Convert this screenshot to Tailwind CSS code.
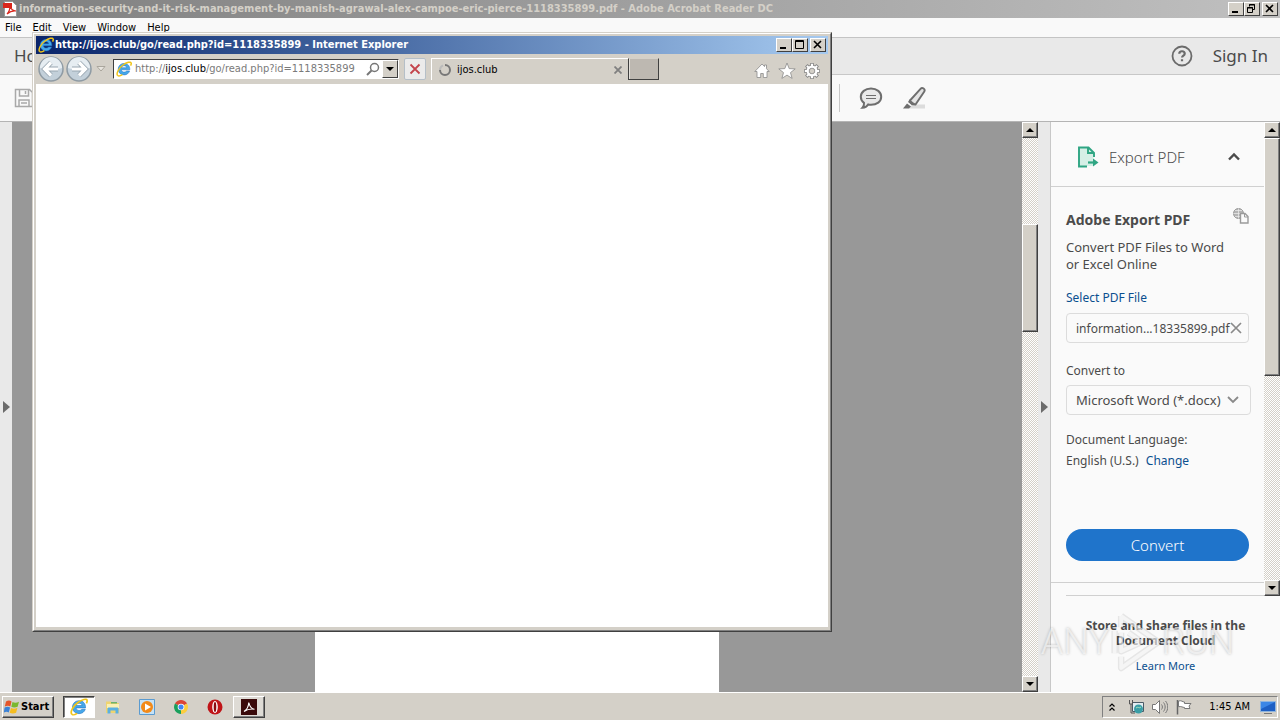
<!DOCTYPE html>
<html lang="en">
<head>
  <meta charset="UTF-8">
  <meta name="viewport" content="width=device-width, initial-scale=1">
  <title>Desktop</title>
  <script src="https://cdn.jsdelivr.net/npm/@tailwindcss/browser@4"></script>
</head>
<body class="relative h-screen flex flex-col overflow-hidden bg-[#f9f9f9] text-black text-[11px] leading-4 font-['DejaVu_Sans_Condensed','DejaVu_Sans',sans-serif]">

  <!-- Shared icons -->
  <svg class="hidden">
    <symbol id="ie" viewBox="0 0 16 16">
      <path d="M13.800 8.800H5.400c.1 1.500 1.300 2.300 2.800 2.300 1.100 0 1.900-.4 2.400-1.100h3c-.8 2.400-2.800 3.900-5.500 3.900-3.500 0-5.900-2.400-5.900-5.700s2.500-5.800 5.900-5.800c3.600 0 5.900 2.500 5.700 6.400zM5.500 6.700h5.200c-.2-1.300-1.200-2-2.600-2s-2.300.7-2.600 2z" fill="#45a8ea" stroke="#1c6fc0" stroke-width=".5"/>
      <path d="M1.800 14.600C-.3 12.800 2.800 7 7 4c3.700-2.800 7.800-3.700 8.200-2 .2.700-.1 1.700-.6 2.700" fill="none" stroke="#f0c419" stroke-width="1.500"/>
      <path d="M1.800 14.600c1 .8 2.800.2 4.600-1" fill="none" stroke="#f0c419" stroke-width="1.300"/>
    </symbol>
    <symbol id="up" viewBox="0 0 14 14"><path d="M3 9h8L7 5z" fill="#000"/></symbol>
    <symbol id="down" viewBox="0 0 14 14"><path d="M3 5h8L7 9z" fill="#000"/></symbol>
    <symbol id="min" viewBox="0 0 14 12"><path d="M3 8h6v2H3z" fill="#000"/></symbol>
    <symbol id="max" viewBox="0 0 14 12"><path d="M2.500 1.500h8v8h-8zM2 2.500h9" fill="none" stroke="#000"/></symbol>
    <symbol id="restore" viewBox="0 0 14 12"><path d="M4.500 1.500h5v5h-2M4.500 3.500v-2M4 2h6M2.500 4.500h5v5h-5zM2 5h6" fill="none" stroke="#000"/></symbol>
    <symbol id="close" viewBox="0 0 14 12"><path d="M3 2l7 7M10 2L3 9" stroke="#000" stroke-width="1.600"/></symbol>
  </svg>

  <!-- Acrobat title bar -->
  <header class="flex h-[18px] shrink-0 items-center bg-linear-to-r from-[#808080] to-[#c0c0c0] pl-[3px] pr-[2px]">
    <svg class="h-4 w-4 shrink-0" viewBox="0 0 16 16">
      <path d="M1.500.5h8l4 4v11h-12z" fill="#fff" stroke="#999"/>
      <path d="M0 2h9v5H0z" fill="#d9261c"/>
      <path d="M4 13c2-2 3-5 3-8 1 3 3 5 6 5-3-.5-6 .5-9 3z" fill="none" stroke="#d9261c" stroke-width="1.200"/>
    </svg>
    <h1 class="flex-1 truncate font-bold text-[#d4d0c8]">information-security-and-it-risk-management-by-manish-agrawal-alex-campoe-eric-pierce-1118335899.pdf - Adobe Acrobat Reader DC</h1>
    <button aria-label="Minimize" class="h-[14px] w-4 border border-t-white border-l-white border-r-[#404040] border-b-[#404040] bg-[#d4d0c8]"><svg class="h-3 w-[14px]"><use href="#min"/></svg></button>
    <button aria-label="Restore" class="mr-[2px] h-[14px] w-4 border border-t-white border-l-white border-r-[#404040] border-b-[#404040] bg-[#d4d0c8]"><svg class="h-3 w-[14px]"><use href="#restore"/></svg></button>
    <button aria-label="Close" class="h-[14px] w-4 border border-t-white border-l-white border-r-[#404040] border-b-[#404040] bg-[#d4d0c8]"><svg class="h-3 w-[14px]"><use href="#close"/></svg></button>
  </header>

  <!-- Menu -->
  <nav class="flex h-5 shrink-0 items-center gap-[11px] border-b border-[#c4c4c4] px-[5px]">
    <a href="#">File</a>
    <a href="#">Edit</a>
    <a href="#">View</a>
    <a href="#">Window</a>
    <a href="#">Help</a>
  </nav>

  <!-- Tabs row -->
  <div class="flex h-[37px] shrink-0 items-center border-b border-[#c8c8c8] bg-[#e9e9e9] pl-[14px] pr-3 font-['Noto_Sans',sans-serif] text-[17px] text-[#4b4b4b]">
    <a href="#" class="flex-1">Home</a>
    <button aria-label="Help" class="mr-5">
      <svg class="block h-[22px] w-[22px]" viewBox="0 0 22 22" fill="none" stroke="#6b6b6b" stroke-width="1.800">
        <circle cx="11" cy="11" r="9.500"/>
        <path d="M8.300 8.700c0-3.300 5.400-3.300 5.400 0 0 1.900-2.600 1.900-2.600 3.800M11 14.200v2" stroke-width="2.200"/>
      </svg>
    </button>
    <a href="#">Sign In</a>
  </div>

  <!-- Toolbar -->
  <div class="flex h-[47px] shrink-0 items-center border-b border-[#b4b4b4] pl-[14px]">
    <button aria-label="Save">
      <svg class="h-5 w-5" viewBox="0 0 20 20" fill="none" stroke="#a9a9a9" stroke-width="1.500">
        <path d="M1.500 1.500h14l3 3v14h-17zM5.500 2v6h9V2M5 18v-6h10v6M7 15h6M11.500 3v3"/>
      </svg>
    </button>
    <div class="ml-[805px] mr-[19px] h-7 w-px bg-[#c8c8c8]"></div>
    <button aria-label="Comment" class="mr-5">
      <svg class="h-6 w-6" viewBox="0 0 24 24" fill="#e9e9e9" stroke="#6e6e6e" stroke-width="2">
        <path d="M12 2.500c5.800 0 10.200 3.600 10.200 8.300 0 4.800-4.400 8-10.200 8-1 0-2 0-2.800-.3-1.200 2-3.200 3.200-5.700 3.200 1.300-1.300 1.700-3 1.500-4.800-2-1.500-3.200-3.600-3.200-6.100C1.800 6.100 6.200 2.500 12 2.500z"/>
        <path d="M7 9.500h10M7 12.500h10" stroke-width="1.200"/>
      </svg>
    </button>
    <button aria-label="Highlight">
      <svg class="h-6 w-6" viewBox="0 0 24 24">
        <path d="M9 18.500h13v4H6z" fill="#dcdcdc"/>
        <path d="M7 14.500L17.500 2.800c1.800-1.800 5.200.3 3.800 2.800L12.500 18.500c-2.500 0-5-1.500-5.500-4z" fill="#e4e4e4" stroke="#6e6e6e" stroke-width="1.900"/>
        <path d="M6.500 13.500l6.500 5-4 .8L5 16z" fill="#6e6e6e"/>
        <path d="M4 17.500l4 3L6 22.500H0z" fill="#6e6e6e"/>
      </svg>
    </button>
  </div>

  <!-- Document, scroll bar and tools pane -->
  <main class="flex min-h-0 flex-1">
    <button aria-label="Show navigation pane" class="flex w-3 shrink-0 items-center justify-center bg-[#e9e9e9]">
      <svg class="h-3 w-[7px]" viewBox="0 0 7 12"><path d="M0 0l7 6-7 6z" fill="#6b6b6b"/></svg>
    </button>
    <div class="flex flex-1 justify-center bg-[#989898]">
      <div class="w-[404px] bg-white"></div>
    </div>
    <div class="flex w-4 shrink-0 flex-col bg-[repeating-conic-gradient(#d4d0c8_0_25%,#ffffff_0_50%)] bg-[length:2px_2px]">
      <button aria-label="Scroll up" class="h-4 border border-t-white border-l-white border-r-[#404040] border-b-[#404040] bg-[#d4d0c8] shadow-[inset_-1px_-1px_#808080]"><svg class="h-[14px] w-[14px]"><use href="#up"/></svg></button>
      <div class="mt-[86px] h-[108px] border border-t-white border-l-white border-r-[#404040] border-b-[#404040] bg-[#d4d0c8] shadow-[inset_-1px_-1px_#808080]"></div>
      <button aria-label="Scroll down" class="mt-auto h-4 border border-t-white border-l-white border-r-[#404040] border-b-[#404040] bg-[#d4d0c8] shadow-[inset_-1px_-1px_#808080]"><svg class="h-[14px] w-[14px]"><use href="#down"/></svg></button>
    </div>
    <button aria-label="Hide tools pane" class="flex w-3 shrink-0 items-center justify-center bg-[#e9e9e9]">
      <svg class="h-3 w-[7px]" viewBox="0 0 7 12"><path d="M0 0l7 6-7 6z" fill="#6b6b6b"/></svg>
    </button>

    <aside class="flex w-[230px] shrink-0 flex-col border-l border-[#c8c8c8] bg-[#fafafa] font-['Noto_Sans',sans-serif] text-xs leading-[17px] text-[#4b4b4b]">
      <div class="flex h-[474px] shrink-0">
        <div class="flex min-w-0 flex-1 flex-col">
          <div class="flex h-[65px] shrink-0 items-center border-b border-[#d0d0d0] pl-[26px] pr-6 pt-[6px]">
            <svg class="mr-[10px] h-[22px] w-[22px]" viewBox="0 0 22 22">
              <path d="M2 1.500h10l4.500 4.500v14H2z" fill="#d5efe6"/>
              <path d="M10 20.500H2V1.500h9.500L17 7v4M11 1.500V7h6" fill="none" stroke="#2fa583" stroke-width="1.900"/>
              <path d="M11 16.500h6" stroke="#2fa583" stroke-width="2.200"/>
              <path d="M16 12.500l5.500 4-5.500 4z" fill="#2fa583"/>
            </svg>
            <h2 class="flex-1 text-[15px] font-light">Export PDF</h2>
            <button aria-label="Collapse"><svg class="block h-3 w-3" viewBox="0 0 12 12" fill="none" stroke="#4b4b4b" stroke-width="2.400"><path d="M1 8.500l5-5 5 5"/></svg></button>
          </div>
          <div class="flex flex-1 flex-col border-b border-[#d0d0d0] px-[15px]">
            <div class="mt-[17px] flex items-center justify-between">
              <h3 class="mt-[7px] text-sm leading-[17px] font-bold">Adobe Export PDF</h3>
              <svg class="h-4 w-4" viewBox="0 0 16 16" fill="none" stroke="#9a9a9a">
                <circle cx="5.500" cy="5.500" r="5" fill="#b5b5b5"/>
                <path d="M.5 5.500h10M5.500.5v10M2 2.500h7M2 8.500h7" stroke="#eee" stroke-width=".7"/>
                <path d="M7.500 5.500h4.500l3 3v6.500H7.500z" fill="#fafafa" stroke-width="1.400"/>
                <path d="M11.500 5.500v3.500H15"/>
              </svg>
            </div>
            <p class="mt-[11px] text-[13px] leading-[17px]">Convert PDF Files to Word<br>or Excel Online</p>
            <a href="#" class="mt-4 text-[#0a4f8f]">Select PDF File</a>
            <div class="mt-[7px] flex h-[30px] shrink-0 items-center justify-between rounded-sm border border-[#dcdcdc] pl-[9px] pr-[6px]">
              <span class="whitespace-nowrap">information...18335899.pdf</span>
              <button aria-label="Remove file" class="-ml-1"><svg class="block h-3 w-3" viewBox="0 0 12 12" stroke="#8a8a8a" stroke-width="1.700"><path d="M1 1l10 10M11 1L1 11"/></svg></button>
            </div>
            <label for="format" class="mt-[19px]">Convert to</label>
            <div class="relative mt-[6px] -mr-[2px]">
              <select id="format" class="block h-[30px] w-full appearance-none rounded-sm border border-[#dcdcdc] bg-transparent pl-[9px] text-[13px]">
                <option>Microsoft Word (*.docx)</option>
              </select>
              <svg class="pointer-events-none absolute right-3 top-[10px] h-[10px] w-3" viewBox="0 0 12 10" fill="none" stroke="#8a8a8a" stroke-width="1.800"><path d="M1 2l5 5 5-5"/></svg>
            </div>
            <p class="mt-4">Document Language:</p>
            <p class="mt-1">English (U.S.) <a href="#" class="ml-1 text-[#0a4f8f]">Change</a></p>
            <button class="mt-15 h-8 shrink-0 rounded-full bg-[#1f74cb] text-[15px] font-light text-white">Convert</button>
          </div>
          <div class="ml-[15px] mt-3 h-px bg-[#d0d0d0]"></div>
        </div>
        <div class="flex w-4 shrink-0 flex-col bg-[repeating-conic-gradient(#d4d0c8_0_25%,#ffffff_0_50%)] bg-[length:2px_2px]">
          <button aria-label="Scroll up" class="h-4 shrink-0 border border-t-white border-l-white border-r-[#404040] border-b-[#404040] bg-[#d4d0c8] shadow-[inset_-1px_-1px_#808080]"><svg class="h-[14px] w-[14px]"><use href="#up"/></svg></button>
          <div class="h-[238px] border border-t-white border-l-white border-r-[#404040] border-b-[#404040] bg-[#d4d0c8] shadow-[inset_-1px_-1px_#808080]"></div>
          <button aria-label="Scroll down" class="mt-auto h-4 shrink-0 border border-t-white border-l-white border-r-[#404040] border-b-[#404040] bg-[#d4d0c8] shadow-[inset_-1px_-1px_#808080]"><svg class="h-[14px] w-[14px]"><use href="#down"/></svg></button>
        </div>
      </div>
      <div class="flex flex-1 flex-col items-center pt-[22px] text-center leading-[15px]">
        <p class="font-bold">Store and share files in the<br>Document Cloud</p>
        <a href="#" class="mt-[10px] text-[11px] text-[#0a4f8f]">Learn More</a>
      </div>
    </aside>
  </main>

  <!-- Taskbar -->
  <footer class="flex h-7 shrink-0 items-center border-t border-white bg-[#d4d0c8] px-[2px]">
    <button class="flex h-[22px] w-[52px] items-center gap-px border border-t-white border-l-white border-r-[#404040] border-b-[#404040] pl-px font-bold shadow-[inset_-1px_-1px_#808080]">
      <svg class="h-4 w-4 shrink-0" viewBox="0 0 16 16">
        <path d="M2 2.500c2-1.200 4-1.200 5.500 0L6.300 7.500C4.800 6.500 3 6.500.8 7.500z" fill="#e5562a"/>
        <path d="M8.500 3c2 1 4 1 6.500-.3L13.600 7.800c-2.200 1-4.300 1-6.300 0z" fill="#7ab82f"/>
        <path d="M.6 8.500c2-1 4-1 5.500 0L4.800 13.500c-1.500-1-3.300-1-5 0z" fill="#3b82d6"/>
        <path d="M7 9c2 1 4 1 6.400-.2l-1.300 5c-2.200 1-4.300 1-6.400 0z" fill="#f5bd1f"/>
      </svg>
      Start
    </button>
    <div class="ml-[9px] flex items-center gap-[2px]">
      <button aria-label="Internet Explorer" class="flex h-[22px] w-8 items-center justify-center border border-t-[#404040] border-l-[#404040] border-r-white border-b-white bg-white shadow-[inset_1px_1px_#808080]"><svg class="h-[18px] w-[18px]"><use href="#ie"/></svg></button>
      <button aria-label="Explorer" class="flex h-[22px] w-8 items-center justify-center">
        <svg class="h-4 w-4" viewBox="0 0 16 16">
          <path d="M1 2.500h5l1 1.500h7v10H1z" fill="#efd470"/>
          <path d="M2 5h12v4H2z" fill="#faf0b4"/>
          <path d="M6 3h6v1.500H6z" fill="#6cb36c"/>
          <path d="M2.500 14.500V10c0-1 .5-1.500 1.500-1.500h8c1 0 1.500.5 1.500 1.500v4.500h-3V11.500h-5v3z" fill="#5ab0e2"/>
        </svg>
      </button>
      <button aria-label="Media Player" class="flex h-[22px] w-8 items-center justify-center">
        <svg class="h-4 w-4" viewBox="0 0 16 16">
          <path d="M.5.500h15v15H.5z" fill="#c5e2f7" stroke="#5b9bd0"/>
          <circle cx="8" cy="8" r="6" fill="#f28a1a"/>
          <path d="M6 4.500L12 8l-6 3.500z" fill="#fff"/>
        </svg>
      </button>
      <button aria-label="Chrome" class="flex h-[22px] w-8 items-center justify-center">
        <svg class="h-[14px] w-[14px]" viewBox="0 0 16 16">
          <path d="M8 8L1.100 4A8 8 0 0 1 14.900 4z" fill="#dc4437"/>
          <path d="M8 8L1.100 4A8 8 0 0 0 8 16z" fill="#1a9f5c"/>
          <path d="M8 8l6.900-4A8 8 0 0 1 8 16z" fill="#fccd3e"/>
          <circle cx="8" cy="8" r="3.800" fill="#fff"/>
          <circle cx="8" cy="8" r="2.900" fill="#4285f4"/>
        </svg>
      </button>
      <button aria-label="Opera" class="flex h-[22px] w-8 items-center justify-center">
        <svg class="h-4 w-4" viewBox="0 0 16 16">
          <circle cx="8" cy="8" r="7.500" fill="#c01418"/>
          <ellipse cx="8" cy="8" rx="2.800" ry="6" fill="#fff"/>
          <ellipse cx="8" cy="8" rx="1.300" ry="5" fill="#8d0b10"/>
        </svg>
      </button>
      <button aria-label="Acrobat Reader" class="flex h-[22px] w-8 items-center justify-center border border-t-white border-l-white border-r-[#404040] border-b-[#404040] bg-[#dedbd5] shadow-[inset_-1px_-1px_#808080]">
        <svg class="h-4 w-4 shrink-0" viewBox="0 0 16 16">
          <path d="M0 0h16v16H0z" fill="#3a0a0a"/>
          <path d="M3 12.500c2.500-1.500 4.500-5 4.800-9 .8 3.500 2.700 6.500 5.700 6.700-3.500-.6-7.500.3-10.500 2.300z" fill="none" stroke="#fff" stroke-width="1.100"/>
        </svg>
      </button>
    </div>
    <div class="ml-auto flex h-[22px] items-center border border-t-[#808080] border-l-[#808080] border-r-white border-b-white pl-[5px] pr-px">
      <button aria-label="Show hidden icons" class="mr-3"><svg class="block h-2 w-2" viewBox="0 0 8 8" fill="none" stroke="#000" stroke-width="1.200"><path d="M1.500 3.500L4 1l2.500 2.500M1.500 7.500L4 5l2.500 2.500"/></svg></button>
      <svg class="mr-2 h-4 w-4" viewBox="0 0 16 16">
        <path d="M4.500 3.500h11v9h-11z" fill="#e4eef2" stroke="#4b5b66"/>
        <path d="M1.500 1v4h3V1M3 5v9h4" fill="none" stroke="#555"/>
        <circle cx="10.500" cy="10" r="4.500" fill="#3a9ea6"/>
        <path d="M8 9c2-2 3 1 5-1" fill="none" stroke="#a9e0b9"/>
      </svg>
      <svg class="mr-2 h-4 w-4" viewBox="0 0 16 16" stroke="#777">
        <path d="M.5 5.500h3l4-4v13l-4-4h-3z" fill="#fff"/>
        <path d="M9.500 5.500c1.200 1.500 1.200 3.500 0 5M11.500 3.500c2.200 2.700 2.200 6.300 0 9M13.500 2c3 3.500 3 8.500 0 12" fill="none"/>
      </svg>
      <svg class="mr-[17px] h-4 w-4" viewBox="0 0 16 16">
        <path d="M1.500 1v14.500" stroke="#666" stroke-width="1.500"/>
        <path d="M2.500 2c3-1 4 1 6 1v1.500h6.500l-2 2.500 1 2.500H8.500V8.500c-2 0-3-1.500-6-.8z" fill="#fff" stroke="#777"/>
      </svg>
      <time class="mr-[10px]">1:45 AM</time>
      <svg class="h-4 w-4" viewBox="0 0 16 16">
        <path d="M.5 2.500h15v10H.5z" fill="#1d5fc4" stroke="#8fb4dd"/>
        <path d="M1 3h14L1 10z" fill="#3b86e6"/>
        <path d="M4 14.500h8" stroke="#777"/>
      </svg>
    </div>
  </footer>

  <!-- Internet Explorer window -->
  <section class="absolute left-8 top-8 flex h-[600px] w-[800px] flex-col border border-t-[#d4d0c8] border-l-[#d4d0c8] border-r-[#404040] border-b-[#404040] bg-[#d4d0c8]">
    <div class="flex min-h-0 flex-1 flex-col border border-t-white border-l-white border-r-[#808080] border-b-[#808080] p-[2px]">
      <div class="flex h-[18px] shrink-0 items-center bg-linear-to-r from-[#0a246a] to-[#a6caf0] px-[2px]">
        <svg class="h-4 w-4 shrink-0"><use href="#ie"/></svg>
        <h2 class="ml-px flex-1 truncate font-bold text-white">http://ijos.club/go/read.php?id=1118335899 - Internet Explorer</h2>
        <button aria-label="Minimize" class="h-[14px] w-4 border border-t-white border-l-white border-r-[#404040] border-b-[#404040] bg-[#d4d0c8]"><svg class="h-3 w-[14px]"><use href="#min"/></svg></button>
        <button aria-label="Maximize" class="mr-[2px] h-[14px] w-4 border border-t-white border-l-white border-r-[#404040] border-b-[#404040] bg-[#d4d0c8]"><svg class="h-3 w-[14px]"><use href="#max"/></svg></button>
        <button aria-label="Close" class="h-[14px] w-4 border border-t-white border-l-white border-r-[#404040] border-b-[#404040] bg-[#d4d0c8]"><svg class="h-3 w-[14px]"><use href="#close"/></svg></button>
      </div>

      <div class="flex h-[30px] shrink-0 items-center pl-[2px] pr-2">
        <button aria-label="Back" class="mr-[2px]"><svg class="block h-[26px] w-[26px]" viewBox="0 0 26 26">
          <circle cx="13" cy="13" r="12" fill="#c3d0da" stroke="#8f9ba4" stroke-width="1.500"/>
          <path d="M2 12a11 11 0 0 1 22 0c-6 2-16 2-22 0z" fill="#e6edf2"/>
          <path d="M13 6.500L6.500 13l6.500 6.500M7.500 13H20" fill="none" stroke="#97a5b0" stroke-width="4.800"/>
          <path d="M13 6.500L6.500 13l6.500 6.500M7.500 13H20" fill="none" stroke="#fff" stroke-width="3.200"/>
        </svg></button>
        <button aria-label="Forward" class="mr-1"><svg class="block h-[26px] w-[26px]" viewBox="0 0 26 26">
          <circle cx="13" cy="13" r="12" fill="#c3d0da" stroke="#8f9ba4" stroke-width="1.500"/>
          <path d="M2 12a11 11 0 0 1 22 0c-6 2-16 2-22 0z" fill="#e6edf2"/>
          <path d="M13 6.500l6.500 6.500-6.500 6.500M18.500 13H6" fill="none" stroke="#97a5b0" stroke-width="4.800"/>
          <path d="M13 6.500l6.500 6.500-6.500 6.500M18.500 13H6" fill="none" stroke="#fff" stroke-width="3.200"/>
        </svg></button>
        <svg class="mr-[7px] h-2 w-[10px]" viewBox="0 0 10 8"><path d="M1 1.500h8L5 6z" fill="#e8e5df" stroke="#aaa69d"/></svg>
        <div class="flex h-5 w-[286px] items-center border border-t-[#404040] border-l-[#404040] border-r-white border-b-white bg-white pl-[2px]">
          <svg class="h-4 w-4 shrink-0"><use href="#ie"/></svg>
          <p class="ml-[3px] flex-1 whitespace-nowrap text-[#7a7a7a]">http://<span class="text-black">ijos.club</span>/go/read.php?id=1118335899</p>
          <button aria-label="Search"><svg class="mr-[2px] block h-[14px] w-[14px]" viewBox="0 0 14 14" fill="none" stroke="#777"><circle cx="8.500" cy="5.500" r="4" stroke-width="1.500"/><path d="M5.500 8.500L1 13" stroke-width="2"/></svg></button>
          <button aria-label="Address history" class="h-[18px] w-4 border border-t-white border-l-white border-r-[#404040] border-b-[#404040] bg-[#d4d0c8]"><svg class="h-4 w-[14px]"><use href="#down"/></svg></button>
        </div>
        <button aria-label="Stop" class="ml-[5px] flex h-[22px] w-[22px] items-center justify-center rounded-xs border border-[#b5bfc8] bg-[#ebebeb]"><svg class="h-3 w-3" viewBox="0 0 12 12" stroke="#c4444c" stroke-width="1.800"><path d="M1.500 1.500l9 9M10.500 1.500l-9 9"/></svg></button>
        <div class="ml-[5px] flex h-[22px] w-[197px] items-center border-t border-l border-white pl-[7px] pr-[6px]">
          <svg class="mr-[6px] h-3 w-3" viewBox="0 0 12 12" fill="none" stroke-width="2"><path d="M6 1a5 5 0 1 1-5 5" stroke="#777"/><path d="M1 6a5 5 0 0 1 3-4.600" stroke="#bbb"/></svg>
          <span class="flex-1">ijos.club</span>
          <button aria-label="Close tab"><svg class="block h-2 w-2" viewBox="0 0 8 8" stroke="#808080" stroke-width="1.800"><path d="M.5.500l7 7M7.500.500l-7 7"/></svg></button>
        </div>
        <button aria-label="New tab" class="h-[22px] w-[31px] border border-t-[#d4d0c8] border-l-[#404040] border-r-[#404040] border-b-[#404040] bg-[#bdb8b1] shadow-[inset_1px_0_#e4e1db]"></button>
        <div class="ml-auto flex items-center gap-2 pt-1">
          <button aria-label="Home"><svg class="block h-4 w-4" viewBox="0 0 16 16"><path d="M8 1L.8 8.500H3v6h3.700v-4h2.600v4H13v-6h2.200L12.500 5.700V2h-2v1.600z" fill="#fff" stroke="#8a8a8a" stroke-width=".8"/></svg></button>
          <button aria-label="Favorites"><svg class="block h-[18px] w-[18px]" viewBox="0 0 18 18"><path d="M9 1l2.200 5.600 6 .3-4.700 3.700 1.600 5.800L9 13.100l-5.100 3.300 1.600-5.800L.8 6.900l6-.3z" fill="#fff" stroke="#8a8a8a" stroke-width=".8"/></svg></button>
          <button aria-label="Tools"><svg class="block h-4 w-4" viewBox="0 0 16 16" fill="none">
            <g stroke="#858585">
              <path d="M8 0v16M0 8h16M2.300 2.300l11.400 11.400M13.700 2.300L2.300 13.700" stroke-width="3.600"/>
              <circle cx="8" cy="8" r="4.400" stroke-width="3.600"/>
            </g>
            <g stroke="#fff">
              <path d="M8 .8v14.400M.8 8h14.400M2.900 2.900l10.200 10.200M13.100 2.900L2.900 13.100" stroke-width="2"/>
              <circle cx="8" cy="8" r="4.400" stroke-width="2.200"/>
            </g>
            <circle cx="8" cy="8" r="2.800" fill="#d4d0c8" stroke="#858585" stroke-width=".8"/>
          </svg></button>
        </div>
      </div>

      <div class="flex-1 border-b border-[#d4d0c8] bg-white"></div>
    </div>
  </section>

  <!-- Watermark -->
  <div class="pointer-events-none absolute bottom-[46px] right-[46px] flex items-center font-['Roboto',sans-serif] text-4xl leading-[64px] font-light text-white/60 [text-shadow:0_0_3px_rgb(0_0_0/0.25)]">
    <span>ANY</span>
    <svg class="h-16 w-[52px]" viewBox="0 0 56 64" fill="none" stroke-linejoin="round">
      <path d="M12 4l40 28-40 28V48M12 4v12M5 20v24M12 22v20l22-10-14-10" stroke="#000" stroke-opacity=".08" stroke-width="7"/>
      <path d="M12 4l40 28-40 28V48M12 4v12M5 20v24M12 22v20l22-10-14-10" stroke="#fff" stroke-opacity=".6" stroke-width="4"/>
    </svg>
    <span>RUN</span>
  </div>
</body>
</html>
